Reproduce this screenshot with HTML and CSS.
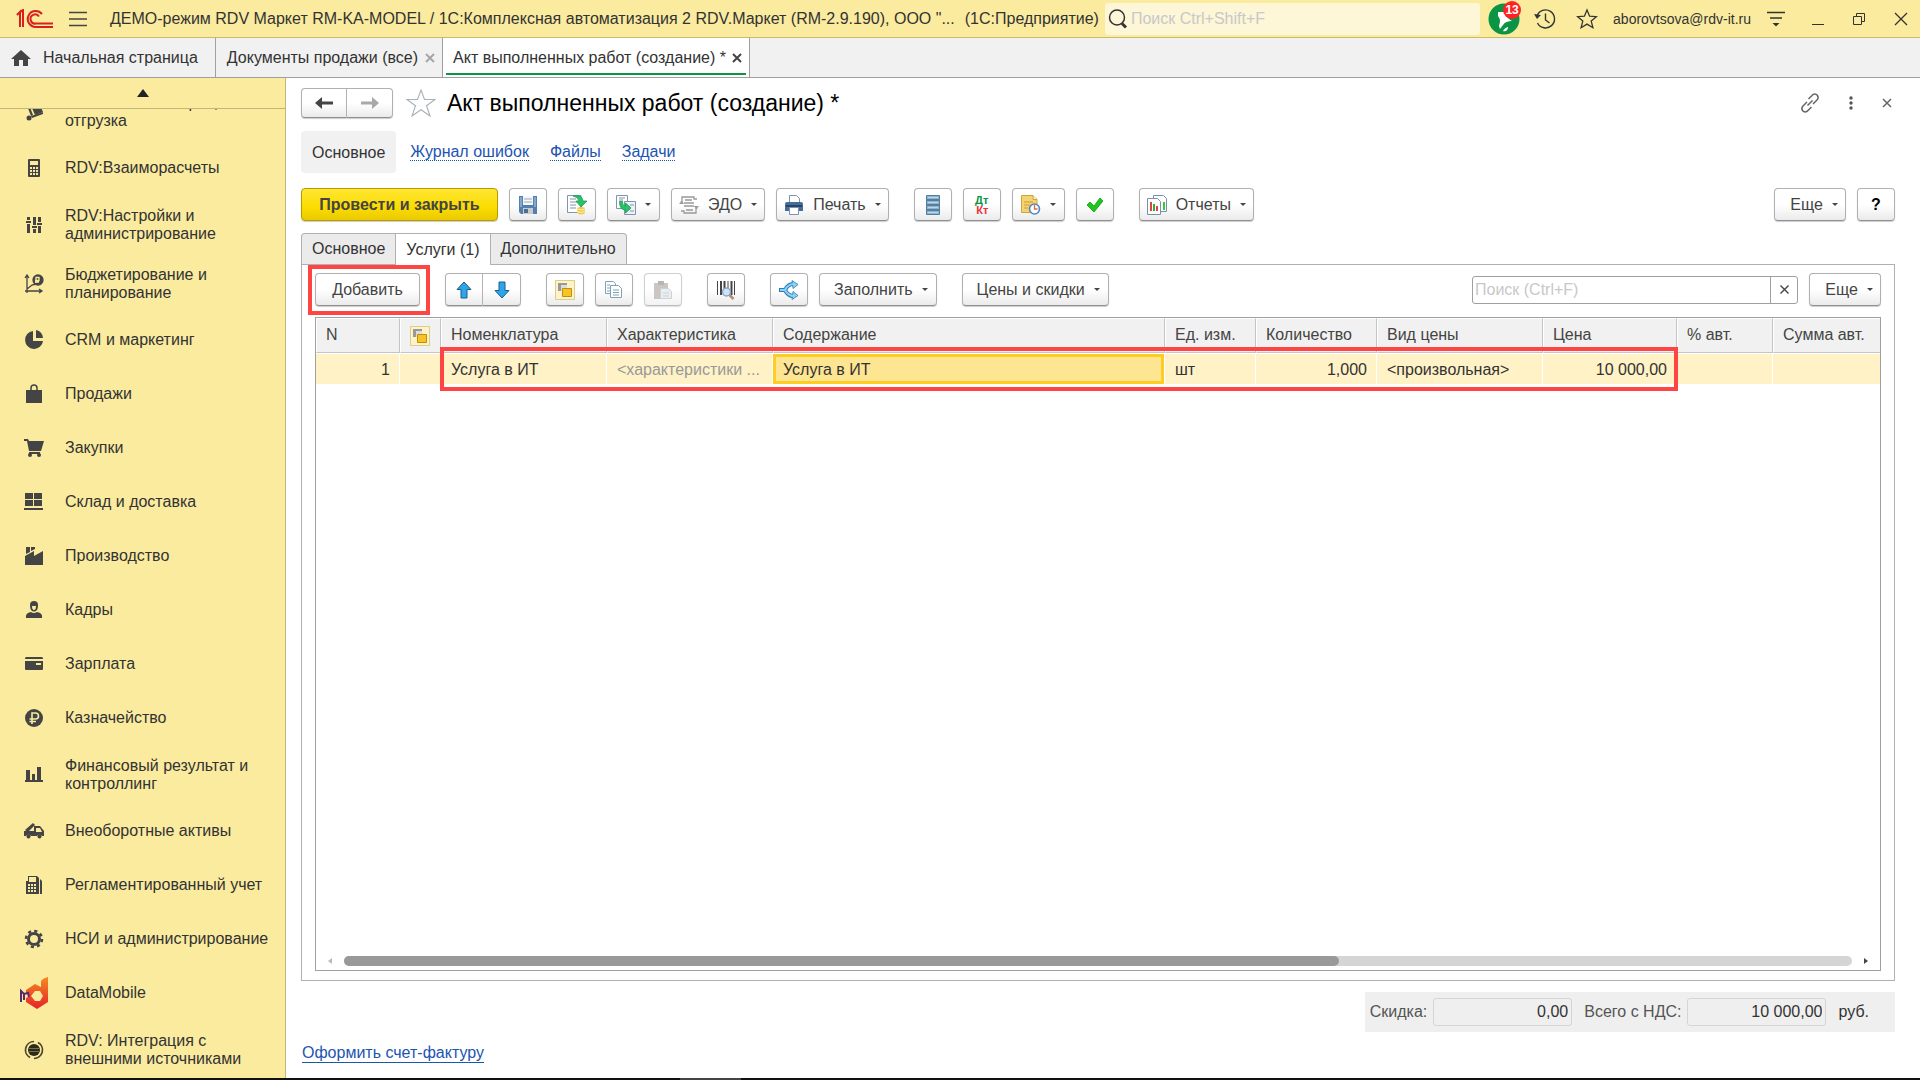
FILE: index.html
```html
<!DOCTYPE html>
<html lang="ru">
<head>
<meta charset="utf-8">
<title>Акт выполненных работ (создание) *</title>
<link rel="stylesheet" href="styles.css">
</head>
<body>
<header class="titlebar">
  <svg class="logo" width="38" height="20" viewBox="0 0 38 20" fill="none" stroke="#d9201f" stroke-width="2"><path d="M1 6l3-3v15M4 3l3-2v17M1 5.500l6-4.500"/><path d="M26 5A8 8 0 1 0 20 18H37"/><path d="M23 7.500A4.600 4.600 0 1 0 20 14.500H37"/></svg>
  <button class="plain" aria-label="Меню"><svg width="18" height="16" viewBox="0 0 18 16" stroke="#444" stroke-width="1.400"><path d="M0 1.500h18M0 8h18M0 14.500h18"/></svg></button>
  <div class="app-title">ДЕМО-режим RDV Маркет RM-KA-MODEL / 1С:Комплексная автоматизация 2 RDV.Маркет (RM-2.9.190), ООО "...</div>
  <div class="app-kind">(1С:Предприятие)</div>
  <label class="global-search"><svg width="22" height="22" viewBox="0 0 22 22" fill="none" stroke="#333"><circle cx="10" cy="9.500" r="7.500" stroke-width="1.500"/><path d="M15 15.500l4 4" stroke-width="3"/></svg><input type="text" placeholder="Поиск Ctrl+Shift+F" aria-label="Поиск"></label>
  <button class="plain bell" aria-label="Оповещения"><svg width="32" height="32" viewBox="0 0 32 32"><circle cx="16" cy="16" r="15.500" fill="#0b9444"/><path d="M10 9l6 0c2 5 5 7 8 9-4 0-7 1-9 4l-3 4-1-3c1-4 2-6-1-10z" fill="#fff"/><path d="M15 28c1-2 2-3 5-4 0 3-2 5-5 4z" fill="#fff"/></svg><span class="badge">13</span></button>
  <button class="plain history" aria-label="История"><svg width="22" height="22" viewBox="0 0 22 22" fill="none" stroke="#333" stroke-width="1.400"><path d="M3 8A9 9 0 1 1 3.500 15"/><path d="M11.500 5.500V12l4 3"/><path d="M0 6l3 5 4-4z" fill="#333" stroke="none"/></svg></button>
  <button class="plain fav" aria-label="Избранное"><svg width="22" height="22" viewBox="0 0 22 22" fill="none" stroke="#333" stroke-width="1.300"><path d="M11 2l2.600 6.200 6.800.500-5.200 4.400 1.700 6.600L11 16.100l-5.900 3.600 1.700-6.600L1.600 8.700l6.800-.500z"/></svg></button>
  <a class="user" href="#">aborovtsova@rdv-it.ru</a>
  <button class="plain" aria-label="Настройки окна"><svg width="18" height="16" viewBox="0 0 18 16" stroke="#333" stroke-width="1.400"><path d="M0 1.500h18M3 7h12"/><path d="M5.500 12h7L9 15.500z" fill="#333" stroke="none"/></svg></button>
  <div class="window-buttons">
    <button class="plain" aria-label="Свернуть"><svg width="12" height="14" viewBox="0 0 12 14" stroke="#333"><path d="M0 12.500h12"/></svg></button>
    <button class="plain" aria-label="Развернуть"><svg width="12" height="12" viewBox="0 0 12 12" fill="none" stroke="#333"><path d="M.5 3.500h8v8h-8zM3.500 3V.5h8v8H9"/></svg></button>
    <button class="plain" aria-label="Закрыть"><svg width="14" height="14" viewBox="0 0 14 14" stroke="#333" stroke-width="1.300"><path d="M1 1l12 12M13 1L1 13"/></svg></button>
  </div>
</header>

<nav class="window-tabs">
  <a class="window-tab home" href="#"><svg width="20" height="16" viewBox="0 0 20 16" fill="#444"><path d="M10 0l10 9h-3v7h-5v-6H8v6H3V9H0z"/></svg>Начальная страница</a>
  <a class="window-tab" href="#">Документы продажи (все)<svg width="10" height="10" viewBox="0 0 10 10" stroke="#a6a6a6" stroke-width="2"><path d="M1 1l8 8M9 1L1 9"/></svg></a>
  <a class="window-tab current" href="#">Акт выполненных работ (создание) *<svg width="10" height="10" viewBox="0 0 10 10" stroke="#444" stroke-width="2"><path d="M1 1l8 8M9 1L1 9"/></svg></a>
</nav>

<div class="workspace">
  <aside class="sidebar">
    <button class="scroll-up" aria-label="Прокрутить вверх"><svg width="12" height="8" viewBox="0 0 12 8" fill="#222"><path d="M6 0l6 8H0z"/></svg></button>
    <div class="sections-clip">
    <ul class="sections">
      <li class="wide"><a href="#"><svg viewBox="0 0 20 20" fill="#444"><path d="M2 1l2-1 5 13-2 1z"/><path d="M8 6l8-3 3 7-8 3z"/><path d="M7 14l12-4v2L8 16z"/><circle cx="5" cy="16" r="2.500"/></svg>RDV:Заказ и сборка, отгрузка</a></li>
      <li><a href="#"><svg viewBox="0 0 20 20" fill="#444"><path fill-rule="evenodd" d="M5 1h10q1 0 1 1v16q0 1-1 1H5q-1 0-1-1V2q0-1 1-1zm1 2v4h8V3zm0 6v2h2V9zm3 0v2h2V9zm3 0v2h2V9zm-6 3v2h2v-2zm3 0v2h2v-2zm3 0v2h2v-2zm-6 3v2h2v-2zm3 0v2h2v-2zm3 0v2h2v-2z"/></svg>RDV:Взаиморасчеты</a></li>
      <li class="wide"><a href="#"><svg viewBox="0 0 20 20" fill="#444"><path d="M3 2h3v3H3zM2 6h5v2H2zM3 9h3v9H3zM9 2h3v8H9zM8 11h5v2H8zM9 14h3v4H9zM14 2h3v5h-3zM13 8h5v2h-5zM14 11h3v7h-3z"/></svg>RDV:Настройки и администрирование</a></li>
      <li class="wide"><a href="#"><svg viewBox="0 0 20 20" fill="none" stroke="#444" stroke-width="1.300"><path d="M3 19V2M1 4l2-3 2 3M1 17h17M15 15l3 2-3 2M3 15l5-4 4-1"/><circle cx="14" cy="6" r="5" fill="#444"/><path d="M12 9V3.500h3v3h-4M11 8h4" stroke="#faeb9f"/></svg>Бюджетирование и планирование</a></li>
      <li><a href="#"><svg viewBox="0 0 20 20" fill="#444"><path d="M9 1v10h10A9 9 0 1 1 9 1z"/><path d="M12 0a9 9 0 0 1 7 8h-7z"/></svg>CRM и маркетинг</a></li>
      <li><a href="#"><svg viewBox="0 0 20 20" fill="#444"><path d="M2 6h16v13H2z"/><path d="M7 9V4a3 3 0 0 1 6 0v5" fill="none" stroke="#444" stroke-width="1.500"/></svg>Продажи</a></li>
      <li><a href="#"><svg viewBox="0 0 20 20" fill="#444"><path d="M0 1h4l1 2h15l-3 10H5L3 3H0z"/><path d="M5 14h11v2H5z"/><circle cx="6" cy="17" r="2"/><circle cx="15" cy="17" r="2"/></svg>Закупки</a></li>
      <li><a href="#"><svg viewBox="0 0 20 20" fill="#444"><path d="M1 1h8v6H1zM10 1h8v6h-8zM1 8h8v6H1zM10 8h8v6h-8zM0 16h19v2H0z"/></svg>Склад и доставка</a></li>
      <li><a href="#"><svg viewBox="0 0 20 20" fill="#444"><path d="M1 19v-9l9-5v5l9-5v14z"/><path d="M2 1h4v5L2 8zM7 1h4v2L7 5z"/></svg>Производство</a></li>
      <li><a href="#"><svg viewBox="0 0 20 20" fill="#444"><path d="M6 5q0-4 4-4t4 4-1 5q-3 3-6 0-1-1-1-5z"/><path d="M2 18q-1-5 5-6 3 2 6 0 6 1 5 6z"/><path d="M8 6h4q0 4-2 4T8 6z" fill="#faeb9f"/></svg>Кадры</a></li>
      <li><a href="#"><svg viewBox="0 0 20 20" fill="#444"><path d="M2 3h16q1 0 1 2H1q0-2 1-2z"/><path fill-rule="evenodd" d="M1 7h18v8q0 1-1 1H2q-1 0-1-1zm11 2v2h5V9z"/></svg>Зарплата</a></li>
      <li><a href="#"><svg viewBox="0 0 20 20"><circle cx="10" cy="10" r="9" fill="#444"/><path d="M8 16V5h3.500a2.800 2.800 0 0 1 0 6H5.500M5.500 13.500H12" fill="none" stroke="#faeb9f" stroke-width="1.600"/></svg>Казначейство</a></li>
      <li class="wide"><a href="#"><svg viewBox="0 0 20 20" fill="#444"><path d="M2 5h4v11H2zM8 9h3v7H8zM13 2h4v14h-4zM1 15h18v2H1z"/></svg>Финансовый результат и контроллинг</a></li>
      <li><a href="#"><svg viewBox="0 0 20 20" fill="#444"><path d="M1 9l8-7 2 2-7 7z"/><path fill-rule="evenodd" d="M0 10h10V5h6l4 5v5h-2a3 3 0 0 0-5 0H7a3 3 0 0 0-5 0H0zm12-3v4h6l-2-4z"/><circle cx="4.500" cy="15.500" r="2"/><circle cx="15.500" cy="15.500" r="2"/></svg>Внеоборотные активы</a></li>
      <li><a href="#"><svg viewBox="0 0 20 20" fill="#444"><path fill-rule="evenodd" d="M4 1h9l2 2v16H2V6h2zm1 1v5h7V2zM4 9v2h2V9zm3 0v2h2V9zm3 0v2h2V9zm-6 3v2h2v-2zm3 0v2h2v-2zm3 0v2h2v-2zm-6 3v2h2v-2zm3 0v2h2v-2zm3 0v2h2v-2z"/><path d="M16 4l2 2v13h-2z"/></svg>Регламентированный учет</a></li>
      <li><a href="#"><svg viewBox="0 0 20 20" fill="none" stroke="#444"><circle cx="10" cy="10" r="5.500" stroke-width="3"/><circle cx="10" cy="10" r="8" stroke-width="2.500" stroke-dasharray="3.140 3.140"/></svg>НСИ и администрирование</a></li>
      <li><a href="#"><svg class="big" viewBox="0 0 28 32"><defs><linearGradient id="dm" x1="0" y1="0" x2="0" y2="1"><stop offset="0" stop-color="#f58a1f"/><stop offset="1" stop-color="#e8202a"/></linearGradient></defs><path fill="url(#dm)" fill-rule="evenodd" d="M21 4q2-3 7-4v25l-11 7-11-7v-4l4-2-4-3v-3l9-6 6 3zm-10 15l4 5h5l3-5-3-5h-5z"/><path d="M1 25V14l3 3 4-1 1 4M4 17v6" fill="none" stroke="#5a2a6e" stroke-width="2"/></svg>DataMobile</a></li>
      <li class="wide"><a href="#"><svg viewBox="0 0 20 20"><circle cx="10" cy="10" r="6" fill="#2c2a1c"/><path d="M10 1.500A8.500 8.500 0 0 0 6 17.500M10 18.500A8.500 8.500 0 0 0 14 2.500" fill="none" stroke="#4a452c" stroke-width="1.700"/><path d="M5 8.500h10M5 11.500h10" stroke="#9c8f55" stroke-width=".7"/></svg>RDV: Интеграция с внешними источниками</a></li>
    </ul>
    </div>
  </aside>

  <main class="document">
    <div class="doc-head">
      <div class="pair">
        <button class="btn" aria-label="Назад"><svg width="18" height="14" viewBox="0 0 18 14" fill="#444"><path d="M0 7l7-6v4.500h11v3H7V13z"/></svg></button>
        <button class="btn" aria-label="Вперед"><svg width="18" height="14" viewBox="0 0 18 14" fill="#a8a8a8"><path d="M18 7l-7-6v4.500H0v3h11V13z"/></svg></button>
      </div>
      <svg class="doc-star" width="30" height="28" viewBox="0 0 30 28" fill="none" stroke="#a9b0b8" stroke-width="1.100"><path d="M15 1l3.500 9.500H29l-8.500 6.200L24 27l-9-6.300L6 27l3.500-10.300L1 10.500h10.500z"/></svg>
      <h1>Акт выполненных работ (создание) *</h1>
      <div class="doc-tools">
        <button class="plain" aria-label="Ссылка"><svg width="20" height="20" viewBox="0 0 20 20" fill="none" stroke="#666" stroke-width="1.500"><path d="M8.500 6L12 2.500a3.400 3.400 0 0 1 5.500 0q1.500 2.500-.5 4.500L13 11M11.500 14L8 17.500a3.400 3.400 0 0 1-5.500 0Q1 15 3 13l4-4M7.500 12.500l5-5"/></svg></button>
        <button class="plain" aria-label="Действия"><svg width="4" height="14" viewBox="0 0 4 14" fill="#555"><circle cx="2" cy="2" r="1.700"/><circle cx="2" cy="7" r="1.700"/><circle cx="2" cy="12" r="1.700"/></svg></button>
        <button class="plain" aria-label="Закрыть документ"><svg width="10" height="10" viewBox="0 0 10 10" stroke="#666" stroke-width="1.500"><path d="M1 1l8 8M9 1L1 9"/></svg></button>
      </div>
    </div>

    <nav class="doc-nav">
      <a class="active" href="#">Основное</a>
      <a href="#"><span>Журнал ошибок</span></a>
      <a href="#"><span>Файлы</span></a>
      <a href="#"><span>Задачи</span></a>
    </nav>

    <div class="toolbar">
      <button class="btn primary">Провести и закрыть</button>
      <button class="btn icon" aria-label="Записать"><svg width="18" height="18" viewBox="0 0 18 18"><path d="M0 0h18v18H2l-2-2z" fill="#5580ad"/><path d="M1 1h2v10H1zM15 1h2v10h-2z" fill="#82a8ce"/><path d="M4 0h10v9H4z" fill="#f4f8fc"/><path d="M5 3h8M5 6h8" stroke="#9ab"/><path d="M4 12h10v6H4z" fill="#c6ccd2"/><path d="M5 13h4v4H5z" fill="#4a6f96"/></svg></button>
      <button class="btn icon" aria-label="Провести"><svg width="20" height="20" viewBox="0 0 20 20"><path d="M.5.500H14v17H.5z" fill="#fff" stroke="#8195aa"/><path d="M3 4h6M3 7h7M3 10h6M3 13h6" stroke="#8195aa"/><path d="M6 1q9-2 10 5h4l-6 6-5-6h3q-1-4-6-5z" fill="#27c36a" stroke="#15994c" stroke-width=".7"/><path d="M10 13q4-2 8 0v5q-4 3-8 0z" fill="#f0c94a"/><path d="M10 14q4 2 8 0M10 16.500q4 2 8 0" fill="none" stroke="#fff3b5"/></svg></button>
      <button class="btn icon-drop" aria-label="Создать на основании"><svg width="20" height="20" viewBox="0 0 20 20"><path d="M.5.500h11v13H.5z" fill="#fff" stroke="#8195aa"/><path d="M8.500 6.500h11v13h-11z" fill="#eef2f6" stroke="#8195aa"/><path d="M3 3h6M3 5h4M14 10h4M14 16h4" stroke="#8195aa"/><path d="M3.500 6.500h3q0 4.500 3 4.500V8l5.500 5-5.500 5v-3q-6 0-6-8.500z" fill="#27c36a" stroke="#15994c" stroke-width=".8"/></svg><i class="caret"></i></button>
      <button class="btn text-drop"><svg width="20" height="20" viewBox="0 0 20 20" fill="none" stroke="#999" stroke-width="1.300"><path d="M3 8V2h12v2h3M2 6l2 3M17 12v6H5v-2H2M18 14l-2-3M6 5h7M5 8h10M5 11h10M7 15h7"/><path d="M0 9h5L2.500 6zM15 11h5l-2.500 3z" fill="#999" stroke="none"/></svg>ЭДО<i class="caret"></i></button>
      <button class="btn text-drop"><svg width="20" height="20" viewBox="0 0 20 20"><path d="M5.500.500h7l3 3V9h-10z" fill="#fff" stroke="#7d93ab"/><path d="M3 7h14q2 0 2 2v7H1V9q0-2 2-2z" fill="#466c97"/><path d="M2 11h16" stroke="#23466b" stroke-width="2"/><path d="M5.500 12.500h9v7h-9z" fill="#fff" stroke="#7d93ab"/></svg>Печать<i class="caret"></i></button>
      <span class="gap"></span>
      <button class="btn icon" aria-label="Регистры"><svg width="14" height="20" viewBox="0 0 14 20"><path d="M.5.500h13v19H.5z" fill="#8fb4d0" stroke="#537f9f"/><path d="M1 5h12M1 10h12M1 15h12" stroke="#426f90" stroke-width="1.500"/><path d="M2 2.500h10M2 7.500h10M2 12.500h10M2 17.500h10" stroke="#bcd6e8"/></svg></button>
      <button class="btn icon dtkt" aria-label="Проводки"><span class="dt">Дт</span><span class="kt">Кт</span></button>
      <button class="btn icon-drop" aria-label="Задания"><svg width="20" height="20" viewBox="0 0 20 20"><path d="M.5.500H12l4 4v13H.5z" fill="#f6d372" stroke="#cda43d"/><path d="M12 .500v4h4" fill="#fff0bd" stroke="#cda43d"/><path d="M3 7h9M3 10h6M3 13h4" stroke="#c79d35"/><circle cx="13.500" cy="14" r="5" fill="#fff" stroke="#5287bd" stroke-width="1.600"/><path d="M13.500 10v4h3" fill="none" stroke="#d65" stroke-width="1.300"/></svg><i class="caret"></i></button>
      <button class="btn icon" aria-label="Проверить"><svg width="18" height="16" viewBox="0 0 18 16"><path d="M1 8l3-3 4 4 6-8 3 3-9 11z" fill="#1cc61c" stroke="#109c10" stroke-width=".8"/></svg></button>
      <span class="gap"></span>
      <button class="btn text-drop"><svg width="20" height="20" viewBox="0 0 20 20"><path d="M6.500.500h10l3 3v13h-13z" fill="#fff" stroke="#7b90a6"/><path d="M17 7v8" stroke="#3c3" stroke-width="2"/><path d="M.5 3.500h10l3 3v13H.5z" fill="#fff" stroke="#7b90a6"/><path d="M4 7v9" stroke="#d44" stroke-width="2"/><path d="M7 9v7" stroke="#3a3" stroke-width="2"/><path d="M10 11v5" stroke="#d44" stroke-width="2"/></svg>Отчеты<i class="caret"></i></button>
      <span class="spacer"></span>
      <button class="btn more">Еще<i class="caret"></i></button>
      <button class="btn icon help">?</button>
    </div>

    <div class="page-tabs" role="tablist">
      <button role="tab">Основное</button>
      <button role="tab" class="selected">Услуги (1)</button>
      <button role="tab">Дополнительно</button>
    </div>

    <section class="page">
      <div class="commands">
        <div class="add-wrap"><button class="btn add">Добавить</button></div>
        <div class="pair arrows">
          <button class="btn" aria-label="Вверх"><svg width="16" height="18" viewBox="0 0 16 18"><path d="M8 1l7 7.500h-4V17H5V8.500H1z" fill="#2fa4e7" stroke="#13608f"/></svg></button>
          <button class="btn" aria-label="Вниз"><svg width="16" height="18" viewBox="0 0 16 18"><path d="M8 17l7-7.500h-4V1H5v8.500H1z" fill="#2fa4e7" stroke="#13608f"/></svg></button>
        </div>
        <span class="gap"></span>
        <button class="btn icon" aria-label="Упаковки"><svg width="20" height="20" viewBox="0 0 20 20"><path d="M.5.500h19v19H.5z" fill="#fdf3c8" stroke="#e0cd85"/><path d="M3 3h9v2H6v6H3z" fill="#999"/><path d="M6 5h6v6H6z" fill="#ddd"/><path d="M7.500 8.500h9v8h-9z" fill="#f7c325" stroke="#c08f10"/></svg></button>
        <button class="btn icon" aria-label="Копировать"><svg width="18" height="18" viewBox="0 0 18 18" fill="#fff" stroke="#7fa3b5"><path d="M.5.500h8l2 2v10H.5z"/><path d="M5.500 4.500h8l3 3v9h-11z"/><path d="M8 9h6M8 11.500h6M8 14h6M2 4h3M2 7h3M2 10h3"/></svg></button>
        <button class="btn icon disabled" aria-label="Вставить" disabled><svg width="18" height="18" viewBox="0 0 18 18"><path d="M0 2h14v16H0z" fill="#ab9f99"/><path d="M4 0h6v4H4z" fill="#8c8583"/><path d="M6.500 7.500h8l3 3v7h-11z" fill="#dfe4e8" stroke="#a9b3bc"/><path d="M9 12h6M9 15h6" stroke="#a9b3bc"/></svg></button>
        <span class="gap"></span>
        <button class="btn icon" aria-label="Поиск по штрихкоду"><svg width="20" height="20" viewBox="0 0 20 20"><path d="M1.500 1v14M18.500 1v14M12 1v14" stroke="#444"/><path d="M5 1v14M8.500 1v14M15.500 1v14" stroke="#444" stroke-width="2"/><circle cx="10.500" cy="12" r="4" fill="#cfe5f7" stroke="#8aa7c7" stroke-width="1.500"/><path d="M13.500 15l4 4" stroke="#b88b6c" stroke-width="2.500"/></svg></button>
        <span class="gap"></span>
        <button class="btn icon" aria-label="Разделить"><svg width="20" height="20" viewBox="0 0 20 20"><path d="M0 10h6M6 10q3-6 8-6M6 10q3 6 8 6" fill="none" stroke="#2b7fb8" stroke-width="4"/><path d="M13 .500l6 4-5 4zM13 19.500l6-4-5-4z" fill="#8fd0f5" stroke="#2b7fb8" stroke-width=".8"/><path d="M1 10h6M6 10q3-6 9-6M6 10q3 6 9 6" fill="none" stroke="#8fd0f5" stroke-width="2"/></svg></button>
        <button class="btn label-drop">Заполнить<i class="caret"></i></button>
        <span class="gap"></span>
        <button class="btn label-drop">Цены и скидки<i class="caret"></i></button>
        <span class="spacer"></span>
        <div class="find"><input type="text" placeholder="Поиск (Ctrl+F)" aria-label="Поиск по таблице"><button aria-label="Очистить"><svg width="9" height="9" viewBox="0 0 9 9" stroke="#444" stroke-width="1.400"><path d="M.5.500l8 8M8.500.500l-8 8"/></svg></button></div>
        <button class="btn more">Еще<i class="caret"></i></button>
      </div>

      <div class="grid">
        <table>
          <colgroup><col class="c-n"><col class="c-pack"><col class="c-item"><col class="c-item"><col><col class="c-unit"><col class="c-qty"><col class="c-item"><col class="c-price"><col class="c-pct"><col class="c-sum"></colgroup>
          <thead><tr><th>N</th><th class="pack"><svg width="20" height="20" viewBox="0 0 20 20"><path d="M.5.500h19v19H.5z" fill="#fdf3c8" stroke="#e0cd85"/><path d="M3 3h9v2H6v6H3z" fill="#999"/><path d="M6 5h6v6H6z" fill="#ddd"/><path d="M7.500 8.500h9v8h-9z" fill="#f7c325" stroke="#c08f10"/></svg></th><th>Номенклатура</th><th>Характеристика</th><th>Содержание</th><th>Ед. изм.</th><th>Количество</th><th>Вид цены</th><th>Цена</th><th>% авт.</th><th>Сумма авт.</th></tr></thead>
          <tbody><tr><td class="num">1</td><td></td><td>Услуга в ИТ</td><td class="hint">&lt;характеристики ...</td><td class="focus">Услуга в ИТ</td><td>шт</td><td class="num">1,000</td><td>&lt;произвольная&gt;</td><td class="num">10 000,00</td><td></td><td></td></tr></tbody>
        </table>
        <div class="row-mark"></div>
        <div class="hscroll"><i class="left"></i><div class="track"><div class="thumb"></div></div><i class="right"></i></div>
      </div>
    </section>

    <footer class="doc-foot">
      <div class="totals">
        <label for="discount">Скидка:</label><input id="discount" type="text" value="0,00" readonly>
        <label for="total">Всего с НДС:</label><input id="total" type="text" value="10 000,00" readonly>
        <span>руб.</span>
      </div>
      <a class="invoice" href="#">Оформить счет-фактуру</a>
    </footer>
  </main>
</div>
<div class="taskbar-edge"></div>
</body>
</html>
```
FILE: styles.css
```css
* { box-sizing: border-box; }
body {
  margin: 0;
  height: 100vh;
  display: flex;
  flex-direction: column;
  overflow: hidden;
  font: 16px/18px "Liberation Sans", Arial, sans-serif;
  color: #333;
  background: #fff;
}
button, input { font: inherit; color: inherit; margin: 0; }
a { color: inherit; text-decoration: none; }
svg { display: block; flex: none; }
.plain { border: 0; background: none; padding: 0; display: flex; align-items: center; justify-content: center; }

/* Title bar */
.titlebar { height: 38px; flex: none; display: flex; align-items: center; padding: 0 12px 0 16px; background: #faeb9f; border-bottom: 1px solid #c9bb6c; white-space: nowrap; }
.logo { margin-right: 15px; }
.app-title { margin-left: 23px; }
.app-kind { margin: 0 6px 0 10px; }
.global-search { flex: 1; height: 32px; display: flex; align-items: center; gap: 2px; padding-left: 2px; border-radius: 3px; background: #fdf6d7; }
.global-search input { flex: 1; min-width: 0; border: 0; padding: 0; background: none; outline: 0; }
input::placeholder { color: #c8c8c8; opacity: 1; }
.bell { position: relative; margin-left: 8px; }
.badge { position: absolute; left: 15px; top: -2px; width: 18px; height: 18px; border-radius: 9px; background: #f22; color: #fff; font-size: 12px; font-weight: bold; text-align: center; }
.history { margin-left: 14px; }
.fav { margin: 0 15px 0 20px; }
.user { font-size: 14px; margin-right: 16px; }
.window-buttons { display: flex; align-items: center; gap: 29px; margin-left: 27px; }

/* Open windows */
.window-tabs { height: 40px; flex: none; display: flex; background: #f1f1f1; border-bottom: 1px solid #a0a0a0; white-space: nowrap; }
.window-tab { display: flex; align-items: center; gap: 7px; padding: 0 7px 0 11px; border-right: 1px solid #a0a0a0; }
.window-tab.home { gap: 12px; padding-right: 17px; }
.window-tab.current { position: relative; background: #fff; padding-left: 10px; gap: 6px; }
.window-tab.current::after { content: ""; position: absolute; left: 3px; right: 3px; bottom: 2px; height: 2px; background: #0b9444; }

.workspace { flex: 1; min-height: 0; display: flex; }

/* Sections */
.sidebar { width: 286px; flex: none; display: flex; flex-direction: column; background: #faeb9f; border-right: 1px solid #c2b777; }
.scroll-up { height: 31px; flex: none; display: flex; align-items: center; justify-content: center; border: 0; border-bottom: 1px solid #c2b777; background: none; }
.sections-clip { flex: 1; min-height: 0; overflow: hidden; }
.sections { list-style: none; margin: -27px 0 0; padding: 0; }
.sections a { height: 54px; display: flex; align-items: center; padding: 0 14px 0 65px; }
.sections .wide a { height: 59px; }
.sections svg { width: 20px; height: 20px; margin: 0 21px 0 -41px; }
.sections svg.big { width: 28px; height: 32px; margin: 0 17px 0 -45px; }

/* Document */
.document { flex: 1; min-width: 0; display: flex; flex-direction: column; padding: 10px 25px 11px 15px; }
.doc-head { display: flex; align-items: center; height: 30px; flex: none; }
.btn { height: 33px; padding: 0; display: flex; align-items: center; justify-content: center; border: 1px solid #b0b0b0; border-bottom-color: #8f8f8f; border-radius: 4px; background: linear-gradient(#fff 50%, #ebebeb); color: #444; box-shadow: 0 1px 1px #ccc; white-space: nowrap; }
.pair { display: flex; }
.pair .btn { width: 46px; height: 30px; }
.pair .btn:first-child { border-radius: 4px 0 0 4px; }
.pair .btn:last-child { border-radius: 0 4px 4px 0; border-left: 0; }
.doc-star { margin: 0 11px 0 13px; }
h1 { margin: 0; font-size: 23px; line-height: 28px; font-weight: normal; color: #000; }
.doc-tools { margin: 0 3px 0 auto; display: flex; align-items: center; gap: 29px; }

.doc-nav { display: flex; margin-top: 13px; height: 42px; flex: none; align-items: center; gap: 21px; color: #1c54b2; }
.doc-nav .active { height: 42px; padding: 13px 11px 11px; margin-right: -7px; border-radius: 4px; background: #f1f1f1; color: #333; }
.doc-nav span { border-bottom: 1px dotted #1c54b2; }

.toolbar, .commands { display: flex; gap: 11px; flex: none; }
.toolbar { margin-top: 15px; }
.primary { width: 197px; border-color: #b39b00; background: linear-gradient(#ffe633, #fbdc00 60%, #eac900); font-weight: bold; }
.icon { width: 38px; }
.icon-drop { width: 53px; gap: 9px; }
.text-drop { padding: 0 7px; gap: 9px; }
.caret { width: 0; border: 3px solid transparent; border-top-color: #444; border-bottom: 0; }
.gap { width: 3px; }
.spacer { flex: 1; }
.more { width: 72px; gap: 9px; padding-left: 8px; }
.help { font-weight: bold; color: #000; }
.dtkt { display: grid; grid-template-rows: 10px 10px; align-content: center; padding: 0 8px; font-size: 11px; line-height: 10px; font-weight: bold; }
.dt { color: #0b9444; text-align: left; }
.kt { color: #e33; text-align: right; }

.page-tabs { display: flex; margin-top: 12px; flex: none; }
.page-tabs button { height: 31px; padding: 0 10px; border: 1px solid #b0b0b0; border-width: 1px 1px 0 0; background: #ebebeb; }
.page-tabs button:first-child { border-left-width: 1px; border-radius: 4px 0 0 0; }
.page-tabs button:last-child { border-radius: 0 4px 0 0; }
.page-tabs .selected { height: 32px; margin-bottom: -1px; background: #fff; position: relative; }

.page { flex: 1; min-height: 0; display: flex; flex-direction: column; padding: 8px 13px 9px; border: 1px solid #b0b0b0; }
.commands { align-items: center; }
.add-wrap { position: relative; margin-right: 14px; }
.add-wrap::after { content: ""; position: absolute; inset: -8px -10px -9px -7px; border: 4px solid #f44; pointer-events: none; }
.add { width: 105px; }
.arrows .btn { width: 38px; height: 33px; }
.disabled { opacity: .6; }
.label-drop { padding: 0 8px 0 14px; gap: 9px; }
.find { width: 326px; height: 28px; display: flex; border: 1px solid #a0a0a0; border-radius: 3px; }
.find input { flex: 1; min-width: 0; border: 0; padding: 0 2px; background: none; outline: 0; }
.find button { width: 27px; border: 0; border-left: 1px solid #a0a0a0; background: none; padding: 0; display: flex; align-items: center; justify-content: center; }

.grid { position: relative; flex: 1; min-height: 0; margin-top: 11px; border: 1px solid #a0a0a0; display: flex; flex-direction: column; }
table { width: 100%; table-layout: fixed; border-collapse: separate; border-spacing: 0; }
.c-n { width: 84px; } .c-pack { width: 41px; } .c-item { width: 166px; } .c-unit { width: 91px; } .c-qty { width: 121px; } .c-price { width: 134px; } .c-pct { width: 96px; } .c-sum { width: 107px; }
th, td { padding: 0 9px; text-align: left; font-weight: normal; white-space: nowrap; overflow: hidden; }
th { height: 35px; padding-bottom: 2px; background: #f1f1f1; border: 1px solid #fff; border-right-color: #c4c4c4; border-bottom-color: #c4c4c4; color: #444; }
td { height: 33px; padding-top: 2px; background: #fef2c6; border: 1px solid #fff; border-left: 0; border-bottom: 2px solid #fff; padding-left: 10px; }
th:last-child, td:last-child { border-right: 0; }
.pack { padding-bottom: 0; }
.num { text-align: right; }
.hint { color: #999; }
td.focus { background: #fee591; box-shadow: inset 0 0 0 3px #fc2; }
.row-mark { position: absolute; left: 124px; right: 202px; top: 29px; height: 44px; border: 4px solid #f44; pointer-events: none; }
.hscroll { margin-top: auto; height: 14px; margin-bottom: 2px; padding: 0 12px; display: flex; align-items: center; }
.track { flex: 1; height: 10px; margin: 0 12px; border-radius: 5px; background: #d5d5d5; }
.thumb { width: 66%; height: 10px; border-radius: 5px; background: #999; }
.left, .right { border: 3px solid transparent; }
.left { border-right: 4px solid #bbb; border-left: 0; }
.right { border-left: 4px solid #444; border-right: 0; }

.doc-foot { flex: none; margin-top: 11px; display: flex; flex-direction: column; }
.totals { align-self: flex-end; display: flex; align-items: center; height: 40px; padding: 0 26px 0 5px; background: #efefef; color: #555; }
.totals input { width: 139px; height: 28px; margin: 0 12px 0 6px; padding: 0 3px; border: 1px solid #d5d5d5; border-radius: 3px; background: transparent; text-align: right; color: #333; }
.totals span { color: #333; }
.invoice { align-self: flex-start; margin: 12px 0 4px 1px; color: #1c54b2; border-bottom: 1px solid #1c54b2; }

.taskbar-edge { height: 2px; flex: none; background: linear-gradient(#444, #444) 680px 0 / 61px 2px no-repeat #111; }
```
